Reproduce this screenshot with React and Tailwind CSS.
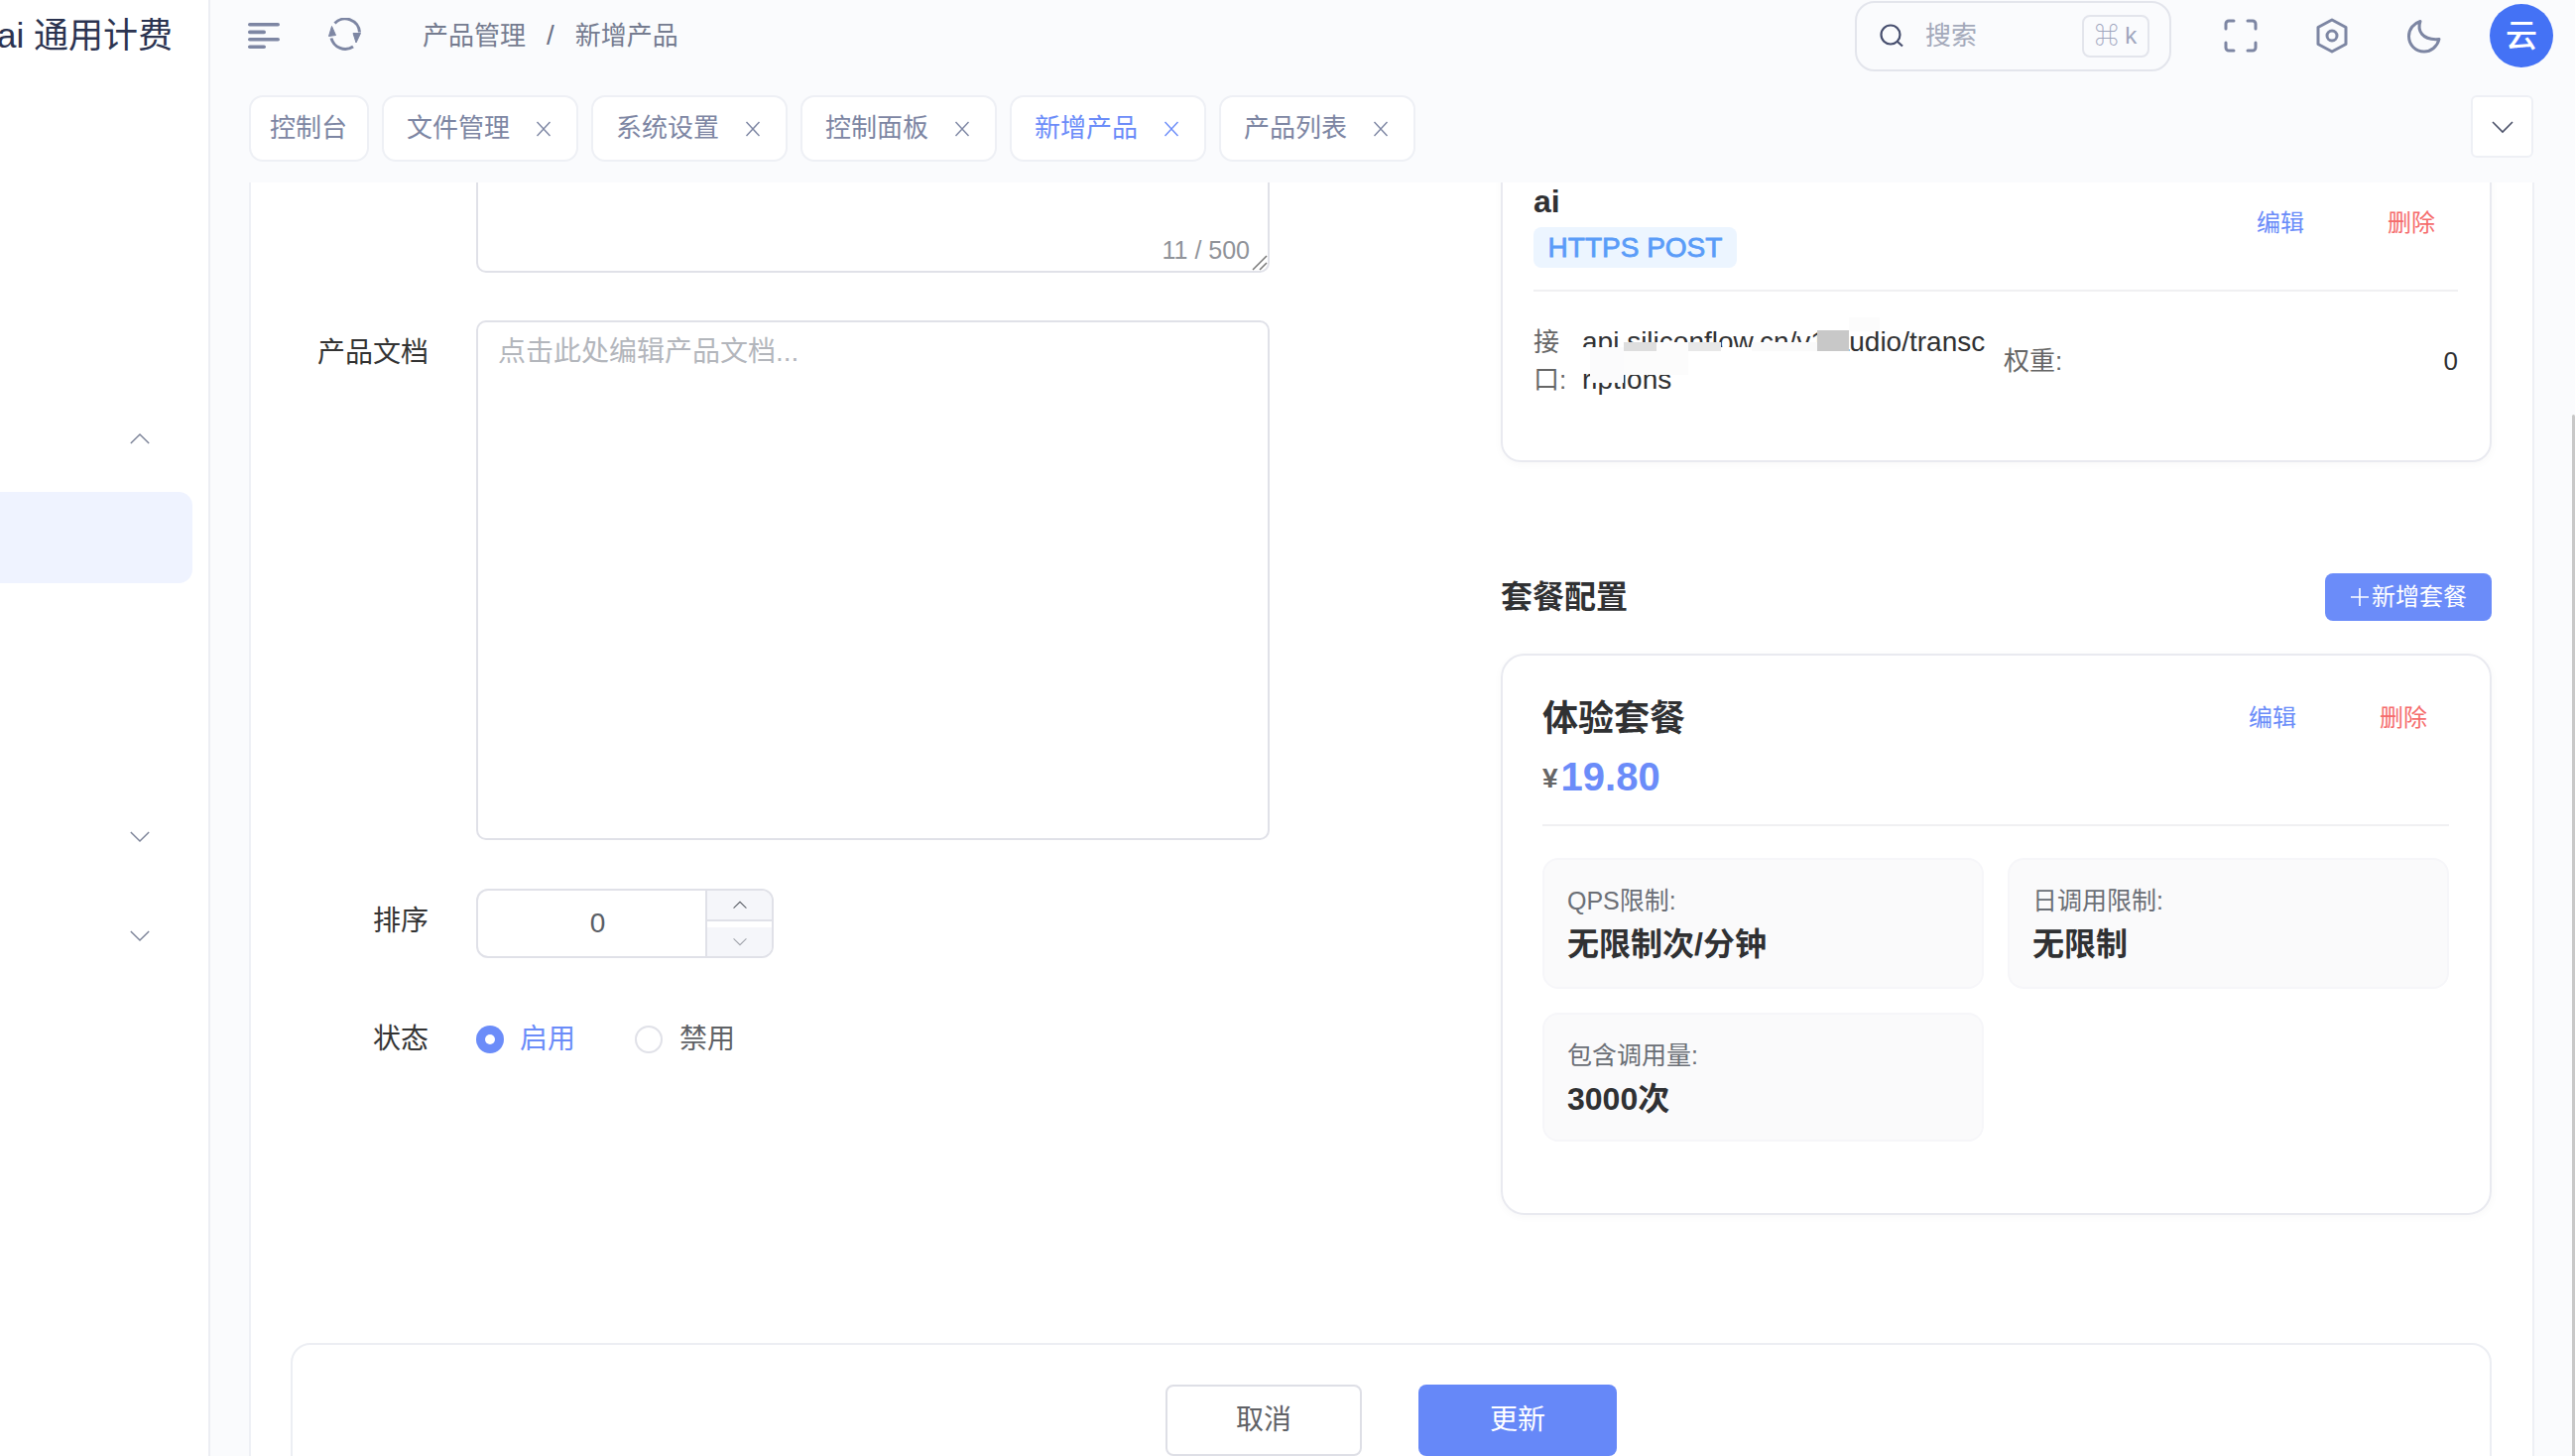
const tabs = [
  { label: '控制台' },
  { label: '文件管理', close: true },
  { label: '系统设置', close: true },
  { label: '控制面板', close: true },
  { label: '新增产品', close: true, active: true },
  { label: '产品列表', close: true },
];

const Chevron = ({ up, className }) => (
  <svg viewBox="0 0 24 14" className={className} fill="none" stroke="currentColor" strokeWidth="1.6">
    <path d={up ? 'M2 12 12 2l10 10' : 'M2 2l10 10L22 2'} />
  </svg>
);

const Close = () => (
  <svg viewBox="0 0 16 16" className="w-[16px] h-[16px]" fill="none" stroke="currentColor" strokeWidth="1.4">
    <path d="M1.500 1l13 14M14.500 1l-13 14" />
  </svg>
);

function Sidebar() {
  return (
    <aside className="w-[212px] shrink-0 bg-white border-r-2 border-[#eceef3] overflow-hidden">
      <div className="h-[72px] flex items-center whitespace-nowrap -ml-[3px] text-[35px] text-[#2b3350]">ai 通用计费</div>
      <div className="mt-[324px] w-[194px]">
        <div className="h-[92px] flex items-center justify-end pr-[42px] text-[#7d8499]">
          <Chevron up className="w-[22px] h-[13px]" />
        </div>
        <div className="mt-[8px] h-[92px] bg-[#eff3ff] rounded-r-[14px]" />
        <div className="mt-[209px] h-[92px] flex items-center justify-end pr-[42px] text-[#7d8499]">
          <Chevron className="w-[22px] h-[13px]" />
        </div>
        <div className="mt-[8px] h-[92px] flex items-center justify-end pr-[42px] text-[#7d8499]">
          <Chevron className="w-[22px] h-[13px]" />
        </div>
      </div>
    </aside>
  );
}

function Header() {
  return (
    <header className="h-[72px] flex items-center pl-[38px] pr-[22px] text-[#7d86a3]">
      <svg viewBox="0 0 32 26" className="w-[32px] h-[26px]" fill="currentColor">
        <rect x="0" y="0" width="32" height="3.6" rx="1.8" />
        <rect x="0" y="7.6" width="18" height="3.6" rx="1.8" />
        <rect x="0" y="15" width="32" height="3.6" rx="1.8" />
        <rect x="0" y="22.4" width="18" height="3.6" rx="1.8" />
      </svg>
      <svg viewBox="10 8.500 36 36" className="w-[36px] h-[36px] ml-[48px]" fill="none" stroke="currentColor" strokeWidth="3">
        <path d="M17.500 14A14.500 14.500 0 0 1 42.500 23" />
        <path d="M36 37.500A14.500 14.500 0 0 1 14 29" />
        <path d="M14.500 17 11.500 27 18.500 26z" fill="currentColor" stroke="currentColor" strokeWidth="1" strokeLinejoin="round" />
        <path d="M39 33.500 36 24 43.500 24z" fill="currentColor" stroke="currentColor" strokeWidth="1" strokeLinejoin="round" />
      </svg>
      <div className="ml-[60px] flex items-center text-[26px] text-[#757c90]">
        <span>产品管理</span>
        <span className="mx-[21px] text-[28px] text-[#6b7186]">/</span>
        <span>新增产品</span>
      </div>
      <div className="ml-auto flex items-center">
        <div className="w-[319px] h-[71px] border-2 border-[#e3e5ec] rounded-[20px] flex items-center pl-[22px] pr-[20px]">
          <svg viewBox="0 0 26 26" className="w-[26px] h-[26px] text-[#464e6e]" fill="none" stroke="currentColor" strokeWidth="2.2">
            <circle cx="12" cy="12" r="9.500" />
            <path d="M19 19l5 4.500" />
          </svg>
          <span className="ml-[21px] text-[26px] text-[#a3a9ba]">搜索</span>
          <span className="ml-auto w-[68px] h-[43px] border-2 border-[#e3e5ec] rounded-[8px] flex items-center justify-center text-[24px] text-[#9fa6bd]">⌘ k</span>
        </div>
        <svg viewBox="0 0 34 34" className="w-[34px] h-[34px] ml-[53px]" fill="none" stroke="currentColor" strokeWidth="3" strokeLinecap="round" strokeLinejoin="round">
          <path d="M2 10V5a3 3 0 0 1 3-3h5M24 2h5a3 3 0 0 1 3 3v5M32 24v5a3 3 0 0 1-3 3h-5M10 32H5a3 3 0 0 1-3-3v-5" />
        </svg>
        <svg viewBox="0 0 32 36" className="w-[32px] h-[36px] ml-[59px]" fill="none" stroke="currentColor" strokeWidth="3" strokeLinejoin="round">
          <path d="M16 2l14 7.500v17L16 34 2 26.500v-17z" />
          <circle cx="16" cy="18" r="5" />
        </svg>
        <svg viewBox="0 0 34 36" className="w-[34px] h-[36px] ml-[60px]" fill="none" stroke="currentColor" strokeWidth="3" strokeLinejoin="round">
          <path d="M13 3.500C10 12 14 23 32 21.500 30 29.500 23.500 34 17 34 8 34 1.500 27 1.500 18.500 1.500 11 6.500 5.500 13 3.500z" />
        </svg>
        <div className="w-[64px] h-[64px] ml-[49px] rounded-full bg-[#4472f5] flex items-center justify-center text-white text-[32px] font-medium">云</div>
      </div>
    </header>
  );
}

function TabBar() {
  return (
    <div className="mt-[24px] h-[67px] mb-[21px] flex items-start justify-between pl-[39px] pr-[42px]">
      <div className="flex gap-[13px]">
        {tabs.map((t) => (
          <div
            key={t.label}
            className={`h-[67px] bg-white border-2 border-[#eef0f5] rounded-[14px] flex items-center text-[26px] ${t.close ? 'pl-[23px] pr-[25px] w-[198px]' : 'px-[19px] w-[121px]'} ${t.active ? 'text-[#6b8cf9]' : 'text-[#7d86a3]'}`}
          >
            <span className="whitespace-nowrap">{t.label}</span>
            {t.close && (
              <span className="ml-auto">
                <Close />
              </span>
            )}
          </div>
        ))}
      </div>
      <div className="w-[63px] h-[63px] bg-white border-2 border-[#eef0f5] rounded-[6px] flex items-center justify-center text-[#4a5068]">
        <Chevron className="w-[24px] h-[14px]" />
      </div>
    </div>
  );
}

function FormLeft() {
  return (
    <div className="w-[1027px] shrink-0">
      <div className="ml-[227px] w-[800px] h-[111px] relative border-2 border-[#e0e1e8] rounded-[10px] bg-white">
        <span className="absolute right-[18px] bottom-[7px] text-[25px] leading-[28px] text-[#909399]">11 / 500</span>
        <svg viewBox="0 0 16 16" className="absolute right-0 bottom-0 w-[16px] h-[16px] text-[#777]" fill="none" stroke="currentColor" strokeWidth="1.5">
          <path d="M1 15 15 1M8 15l7-7" />
        </svg>
      </div>

      <div className="mt-[48px] flex">
        <label className="w-[179px] text-right text-[28px] leading-[66px] text-[#333]">产品文档</label>
        <div className="ml-[48px] w-[800px] h-[524px] border-2 border-[#e0e1e8] rounded-[10px] px-[20px] py-[10px] text-[28px] leading-[40px] text-[#b3b6bc]">点击此处编辑产品文档...</div>
      </div>

      <div className="mt-[49px] flex items-center">
        <label className="w-[179px] text-right text-[28px] -mt-[4px] text-[#333]">排序</label>
        <div className="ml-[48px] w-[300px] h-[70px] border-2 border-[#e0e1e8] rounded-[12px] overflow-hidden flex">
          <div className="flex-1 flex items-center justify-center pl-[12px] text-[28px] text-[#5a5e66]">0</div>
          <div className="w-[67px] border-l-2 border-[#e0e1e8] flex flex-col">
            <div className="h-[31px] bg-[#f5f6fa] border-b-2 border-[#e0e1e8] flex items-center justify-center text-[#5a5e66]">
              <Chevron up className="w-[16px] h-[9px]" />
            </div>
            <div className="mt-[6px] flex-1 bg-[#f5f6fa] flex items-center justify-center text-[#a0a3aa]">
              <Chevron className="w-[16px] h-[9px]" />
            </div>
          </div>
        </div>
      </div>

      <div className="mt-[54px] h-[56px] flex items-center">
        <label className="w-[179px] text-right text-[28px] text-[#333]">状态</label>
        <div className="ml-[48px] flex items-center">
          <span className="w-[28px] h-[28px] rounded-full bg-[#6b8cf9] flex items-center justify-center">
            <span className="w-[10px] h-[10px] rounded-full bg-white" />
          </span>
          <span className="ml-[16px] text-[28px] text-[#6b8cf9]">启用</span>
          <span className="ml-[60px] w-[28px] h-[28px] rounded-full border-2 border-[#e0e1e8]" />
          <span className="ml-[17px] text-[28px] text-[#606266]">禁用</span>
        </div>
      </div>
    </div>
  );
}

function Actions({ className }) {
  return (
    <div className={`flex gap-[84px] text-[24px] ${className}`}>
      <span className="text-[#6b8cf9]">编辑</span>
      <span className="text-[#f56c6c]">删除</span>
    </div>
  );
}

function Stat({ label, value }) {
  return (
    <div className="h-full bg-[#fafafb] border-2 border-[#f6f6f9] rounded-[16px] pl-[23px] pt-[25px]">
      <div className="text-[25px] leading-[32px] text-[#6b6f76]">{label}</div>
      <div className="mt-[6px] text-[32px] leading-[44px] font-bold text-[#303133]">{value}</div>
    </div>
  );
}

function FormRight() {
  return (
    <div className="w-[999px] shrink-0">
      <div className="h-[302px] border-2 border-[#e9eaf0] rounded-[20px] pl-[31px] pr-[32px] pt-[18px] shadow-[0_2px_8px_rgba(0,0,0,0.03)]">
        <div className="flex justify-between items-center">
          <div>
            <div className="text-[32px] leading-[38px] font-bold text-[#303133]">ai</div>
            <span className="mt-[7px] w-[205px] h-[41px] bg-[#ecf5ff] rounded-[8px] flex items-center justify-center text-[28px] text-[#5a9cf8] [-webkit-text-stroke:0.8px_#5a9cf8]">HTTPS POST</span>
          </div>
          <Actions className="pr-[23px] mb-[4px]" />
        </div>
        <div className="mt-[22px] h-[2px] bg-[#f0f0f2]" />
        <div className="mt-[32px] flex items-center relative">
          <span className="w-[49px] shrink-0 text-[26px] leading-[38px] text-[#666]">接口:</span>
          <span className="w-[412px] shrink-0 break-all text-[28px] leading-[38px] text-[#303133]">api.siliconflow.cn/v1/audio/transcriptions</span>
          <span className="ml-[13px] text-[26px] text-[#666]">权重:</span>
          <span className="ml-auto text-[26px] font-medium text-[#303133]">0</span>

          {/* smears over the url, they are part of the screenshot */}
          <div className="absolute left-[33px] top-[24px] w-[24px] h-[25px] bg-white" />
          <div className="absolute left-[57px] top-[24px] w-[34px] h-[36px] bg-[#fbfbfc]" />
          <div className="absolute left-[91px] top-[28px] w-[65px] h-[24px] bg-[#fcfcfc]" />
          <div className="absolute left-[156px] top-[28px] w-[130px] h-[18px] bg-white" />
          <div className="absolute left-[91px] top-[19px] w-[33px] h-[9px] bg-[#dedede]" />
          <div className="absolute left-[124px] top-[19px] w-[32px] h-[9px] bg-[#fcfcfc]" />
          <div className="absolute left-[156px] top-[19px] w-[33px] h-[9px] bg-[#e8e8e8]" />
          <div className="absolute left-[189px] top-[24px] w-[31px] h-[4px] bg-white" />
          <div className="absolute left-[220px] top-[19px] w-[66px] h-[9px] bg-[#fafafa]" />
          <div className="absolute left-[286px] top-[7px] w-[32px] h-[21px] bg-[#c8c8c8]" />
          <div className="absolute left-[318px] -top-[6px] w-[31px] h-[14px] bg-[#fcfcfc]" />
        </div>
      </div>

      <div className="mt-[112px] h-[48px] flex items-center justify-between">
        <h3 className="text-[32px] font-bold text-[#303133]">套餐配置</h3>
        <button className="w-[168px] h-[48px] bg-[#6b8cf9] rounded-[8px] flex items-center justify-center gap-[2px] text-white text-[24px]">
          <svg viewBox="0 0 20 20" className="w-[20px] h-[20px]" fill="none" stroke="currentColor" strokeWidth="1.6">
            <path d="M10 1v18M1 10h18" />
          </svg>
          新增套餐
        </button>
      </div>

      <div className="mt-[33px] h-[566px] border-2 border-[#e9eaf0] rounded-[24px] pl-[40px] pr-[41px] pt-[39px] shadow-[0_2px_8px_rgba(0,0,0,0.03)]">
        <div className="flex justify-between items-center h-[48px]">
          <h4 className="pt-[2px] text-[36px] font-bold text-[#303133]">体验套餐</h4>
          <Actions className="pr-[22px]" />
        </div>
        <div className="mt-[11px] h-[48px] flex items-center">
          <span className="text-[28px] font-bold text-[#666] mt-[4px]">¥</span>
          <span className="ml-[3px] text-[40px] font-bold text-[#6b8cf9]">19.80</span>
        </div>
        <div className="mt-[24px] h-[2px] bg-[#f0f0f2]" />
        <div className="mt-[32px] grid grid-cols-2 grid-rows-[132px_130px] gap-[24px]">
          <Stat label="QPS限制:" value="无限制次/分钟" />
          <Stat label="日调用限制:" value="无限制" />
          <Stat label="包含调用量:" value="3000次" />
        </div>
      </div>
    </div>
  );
}

export default function App() {
  return (
    <div className="relative w-[2596px] h-[1468px] flex overflow-hidden bg-[#fafbfd] [font-family:'Liberation_Sans','Noto_Sans_CJK_SC',sans-serif]">
      <Sidebar />
      <main className="flex-1 min-w-0 flex flex-col">
        <Header />
        <TabBar />
        <div className="ml-[39px] mr-[41px] flex-1 min-h-0 bg-white border-x-2 border-[#eef0f5] overflow-hidden">
          <div className="-mt-[20px]">
            <div className="flex gap-[233px]">
              <FormLeft />
              <FormRight />
            </div>
            <div className="mt-[129px] ml-[40px] w-[2219px] h-[200px] border-2 border-[#eceef3] rounded-[20px] pt-[40px] flex justify-center gap-[57px]">
              <button className="w-[198px] h-[72px] bg-white border-2 border-[#dedfe6] rounded-[8px] text-[28px] text-[#606266]">取消</button>
              <button className="w-[200px] h-[72px] bg-[#6688f8] rounded-[8px] text-[28px] text-white">更新</button>
            </div>
          </div>
        </div>
      </main>
      {/* page scrollbar */}
      <div className="absolute right-0 top-[418px] bottom-0 w-[3px] rounded-t-[2px] bg-[#c8c8c8]" />
    </div>
  );
}
